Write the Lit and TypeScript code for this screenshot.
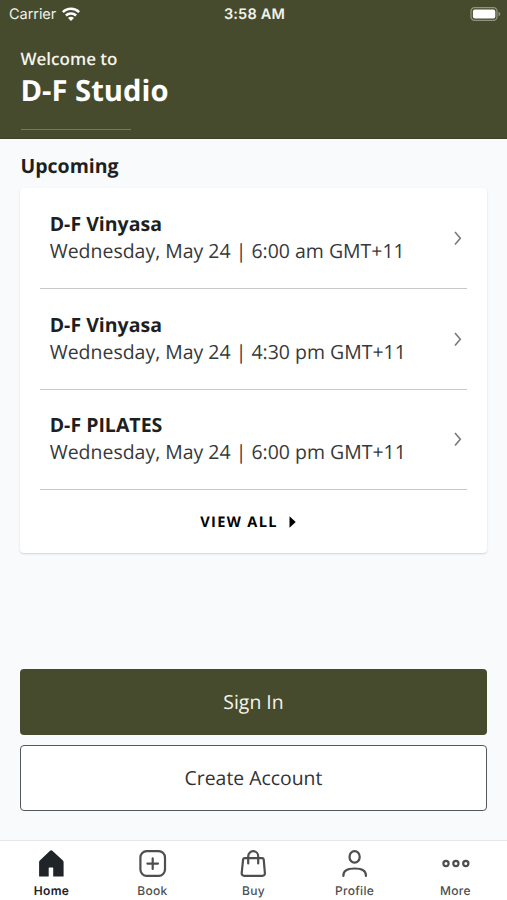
import { LitElement, html, css, svg } from "lit";
import { customElement } from "lit/decorators.js";

const sessions = [
  { name: "D-F Vinyasa", time: "Wednesday, May 24 | 6:00 am GMT+11" },
  { name: "D-F Vinyasa", time: "Wednesday, May 24 | 4:30 pm GMT+11" },
  { name: "D-F PILATES", time: "Wednesday, May 24 | 6:00 pm GMT+11" },
];

const tabs = [
  {
    label: "Home",
    active: true,
    icon: svg`<path d="M16.2 2.2 Q15.5 2.2 14.8 2.9 L4.8 12.6 Q4.1 13.3 4.1 14.3 V28.5 H13.7 V20.2 Q13.7 19.6 14.3 19.6 H17.6 Q18.2 19.6 18.2 20.2 V28.5 H28.6 V14.3 Q28.6 13.3 27.9 12.6 L17.6 2.9 Q16.9 2.2 16.2 2.2Z" fill="currentColor"/>`,
  },
  {
    label: "Book",
    active: false,
    icon: svg`<rect x="4.4" y="3.2" width="24.6" height="24.6" rx="6.3"/><path d="M16.7 10.3 V20.9 M11.4 15.6 H22" stroke-linecap="round"/>`,
  },
  {
    label: "Buy",
    active: false,
    icon: svg`<path d="M7.6 10.2 H25.2 Q26.5 10.2 26.7 11.4 L27.9 25 Q28 27.8 25.4 27.8 H7.2 Q4.6 27.8 4.7 25 L6.1 11.4 Q6.3 10.2 7.6 10.2Z"/><path d="M11.2 15.4 V8.3 A5 5.1 0 0 1 21.2 8.3 V15.4" stroke-linecap="round"/>`,
  },
  {
    label: "Profile",
    active: false,
    icon: svg`<ellipse cx="16.6" cy="8.9" rx="5.1" ry="5.8"/><path d="M5.4 28 V27.2 C5.4 23 9 20.5 16.7 20.5 S27.9 23 27.9 27.2 V28" stroke-linecap="round"/>`,
  },
  {
    label: "More",
    active: false,
    icon: svg`<circle cx="7" cy="15.5" r="2.6"/><circle cx="16.9" cy="15.5" r="2.6"/><circle cx="26.8" cy="15.5" r="2.6"/>`,
  },
];

@customElement("app-root")
export class AppRoot extends LitElement {
  static styles = css`
    :host {
      display: flex;
      flex-direction: column;
      height: 900px;
      overflow: hidden;
      background: #f8fafc;
      color: #1d1f22;
      font-family: "Open Sans", "Noto Sans", sans-serif;
      text-rendering: geometricPrecision;
    }
    * { box-sizing: border-box; }
    svg { display: block; flex: none; }
    .header {
      height: 139px;
      flex: none;
      background: #474b2e;
      border-bottom: 1px solid #3d4127;
      color: #fff;
    }
    .status {
      display: grid;
      grid-template-columns: 1fr auto 1fr;
      align-items: center;
      height: 27px;
      padding: 0 6px 0 9px;
      font-family: Inter, sans-serif;
      font-size: 14.5px;
      color: #f1f2ea;
    }
    .carrier { display: flex; align-items: center; gap: 6px; letter-spacing: -0.05px; }
    .carrier span, .clock { padding-top: 2px; }
    .clock { font-weight: 600; letter-spacing: 0.2px; padding-right: 1px; }
    .battery { justify-self: end; }
    .greeting { display: flex; flex-direction: column; padding: 20px 20.5px 0; }
    .welcome { font-size: 17px; line-height: 24px; font-weight: 600; color: #f3f4ec; }
    .studio { font-size: 29.2px; line-height: 40px; margin-top: -1px; font-weight: 700; }
    .rule { width: 110px; height: 1px; margin-top: 19px; background: #777a5e; }
    .heading {
      font-size: 19.5px;
      line-height: 28px;
      font-weight: 700;
      margin: 13px 0 8px 20.5px;
    }
    .card {
      margin: 0 20px;
      height: 365px;
      flex: none;
      padding: 0 20px;
      background: #fff;
      border-radius: 4px;
      box-shadow: 0 1px 2px rgba(0, 0, 0, 0.16);
    }
    .session {
      display: flex;
      align-items: center;
      justify-content: space-between;
      height: 100.8px;
      padding: 0 5px 0 9.7px;
      border-bottom: 1px solid #c8c8c8;
    }
    .details { padding-bottom: 2px; }
    .name { font-size: 19.5px; line-height: 27px; font-weight: 700; white-space: nowrap; }
    .time { font-size: 19.48px; line-height: 27px; color: #37383a; white-space: nowrap; }
    .all {
      display: flex;
      align-items: center;
      justify-content: center;
      gap: 11px;
      height: 64px;
      padding-right: 11px;
      font-size: 14.6px;
      font-weight: 700;
      letter-spacing: 1.35px;
      color: #000;
    }
    .actions {
      display: flex;
      flex-direction: column;
      gap: 10px;
      margin: auto 20px 29px;
    }
    .button {
      height: 66px;
      display: flex;
      align-items: center;
      justify-content: center;
      padding-bottom: 2px;
      border-radius: 4px;
      font-size: 19.4px;
    }
    .primary { background: #474b2e; color: #f4f5ea; }
    .outline { background: #fff; border: 1.5px solid #55585a; color: #303235; }
    .tabs {
      height: 60px;
      flex: none;
      display: grid;
      grid-template-columns: repeat(5, 1fr);
      padding: 0 1px;
      background: #fff;
      border-top: 1px solid #e6e7e8;
      font-family: Inter, sans-serif;
    }
    .tab {
      display: flex;
      flex-direction: column;
      align-items: center;
      padding-top: 7px;
      color: #4c4e50;
      font-size: 12px;
      font-weight: 500;
      line-height: 16px;
      letter-spacing: 0.3px;
    }
    .icon { margin-right: 1px; }
    .label { margin-top: 3px; }
    .active { color: #202327; font-weight: 600; }
  `;

  render() {
    return html`
      <header class="header">
        <div class="status">
          <div class="carrier">
            <span>Carrier</span>
            <svg width="18" height="14" viewBox="0 0 18 14" fill="none" stroke="#fff" stroke-width="2.5">
              <path d="M0.9 5.2 C5.2 0.7 12.8 0.7 17.1 5.2" />
              <path d="M3.9 8.5 C6.7 5.7 11.3 5.7 14.1 8.5" />
              <path d="M9 14 L6 10.9 Q9 8.6 12 10.9Z" fill="#fff" stroke="none" />
            </svg>
          </div>
          <div class="clock">3:58 AM</div>
          <svg class="battery" width="31" height="14" viewBox="0 0 31 14">
            <rect x="1" y="0.7" width="26" height="12.6" rx="3.6" fill="none" stroke="#92947f" stroke-width="1.3" />
            <rect x="2.9" y="2.4" width="22.4" height="9.2" rx="2" fill="#fff" />
            <path d="M28.5 4.8 Q30.4 5.6 30.4 7 T28.5 9.2Z" fill="#92947f" />
          </svg>
        </div>
        <div class="greeting">
          <div class="welcome">Welcome to</div>
          <div class="studio">D-F Studio</div>
          <div class="rule"></div>
        </div>
      </header>
      <div class="heading">Upcoming</div>
      <section class="card">
        ${sessions.map(
          (s) => html`<div class="session">
            <div class="details">
              <div class="name">${s.name}</div>
              <div class="time">${s.time}</div>
            </div>
            <svg width="9" height="14" viewBox="0 0 9 14" fill="none" stroke="#77797b" stroke-width="1.6">
              <path d="M2 1 L7.3 7.2 L2 13.4" />
            </svg>
          </div>`
        )}
        <div class="all">
          <span>VIEW ALL</span>
          <svg width="7" height="12" viewBox="0 0 7 12"><path d="M0.5 0.2 L6.7 6 L0.5 11.8Z" fill="#000" /></svg>
        </div>
      </section>
      <div class="actions">
        <div class="button primary">Sign In</div>
        <div class="button outline">Create Account</div>
      </div>
      <nav class="tabs">
        ${tabs.map(
          (t) => html`<div class="tab ${t.active ? "active" : ""}">
            <svg class="icon" width="32" height="32" viewBox="0 0 32 32" fill="none" stroke=${t.active ? "none" : "currentColor"} stroke-width="2.2">
              ${t.icon}
            </svg>
            <span class="label">${t.label}</span>
          </div>`
        )}
      </nav>
    `;
  }
}
